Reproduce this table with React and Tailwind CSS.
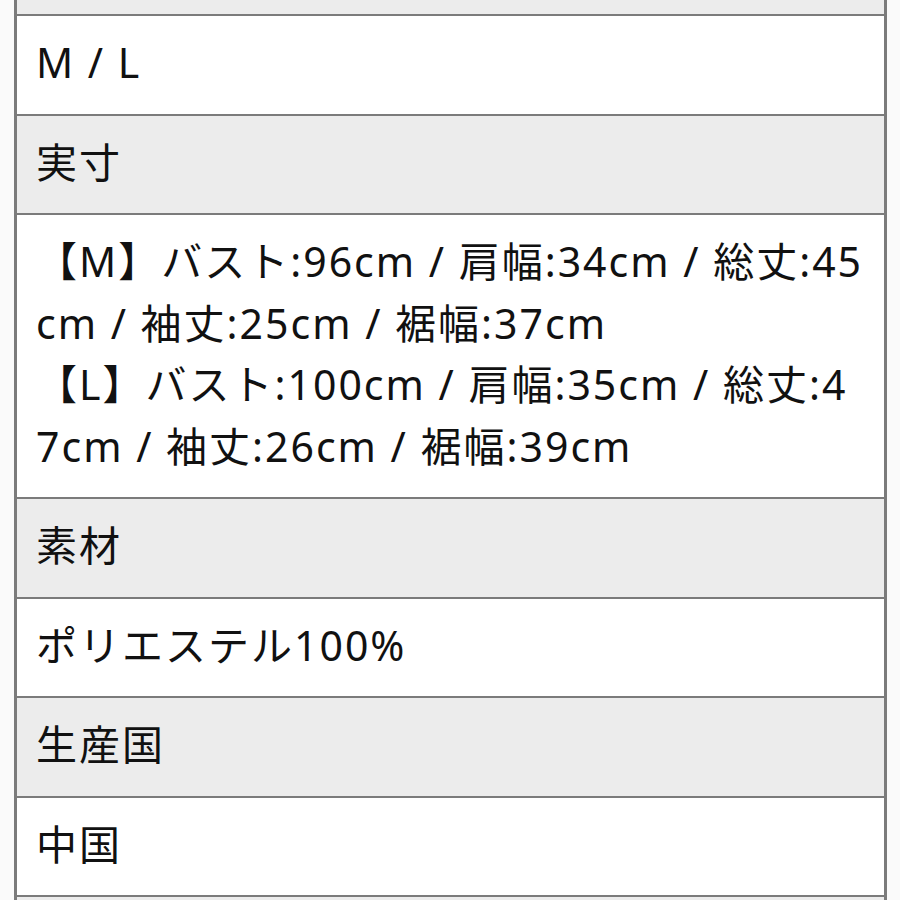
export default function App() {
  const font = { fontFamily: '"Noto Sans", "Noto Sans CJK JP", sans-serif' };
  const rows = [
    { gray: false, text: "M / L" },
    { gray: true, text: "実寸" },
    {
      gray: false,
      text: "【M】バスト:96cm / 肩幅:34cm / 総丈:45cm / 袖丈:25cm / 裾幅:37cm\n【L】バスト:100cm / 肩幅:35cm / 総丈:47cm / 袖丈:26cm / 裾幅:39cm",
    },
    { gray: true, text: "素材" },
    { gray: false, text: "ポリエステル100%" },
    { gray: true, text: "生産国" },
    { gray: false, text: "中国" },
    { gray: true, text: "" },
  ];
  return (
    <div className="w-[900px] h-[900px] overflow-hidden bg-[#fafafa]" style={font}>
      <div className="ml-[14px] w-[873px] border-x-[3px] border-[#7b7b7b] bg-white">
        <div className="h-[14px] bg-[#ececec]" />
        {rows.map((r, i) => (
          <div
            key={i}
            className={`border-t-2 border-[#7b7b7b] ${r.gray ? "bg-[#ececec]" : "bg-white"} pl-[19px] pr-[18px] pt-[16px] pb-[20px] text-[41px] tracking-[2px] leading-[61.5px] text-[#111] whitespace-pre-wrap break-all min-h-[99px]`}
          >
            {r.text}
          </div>
        ))}
      </div>
    </div>
  );
}
